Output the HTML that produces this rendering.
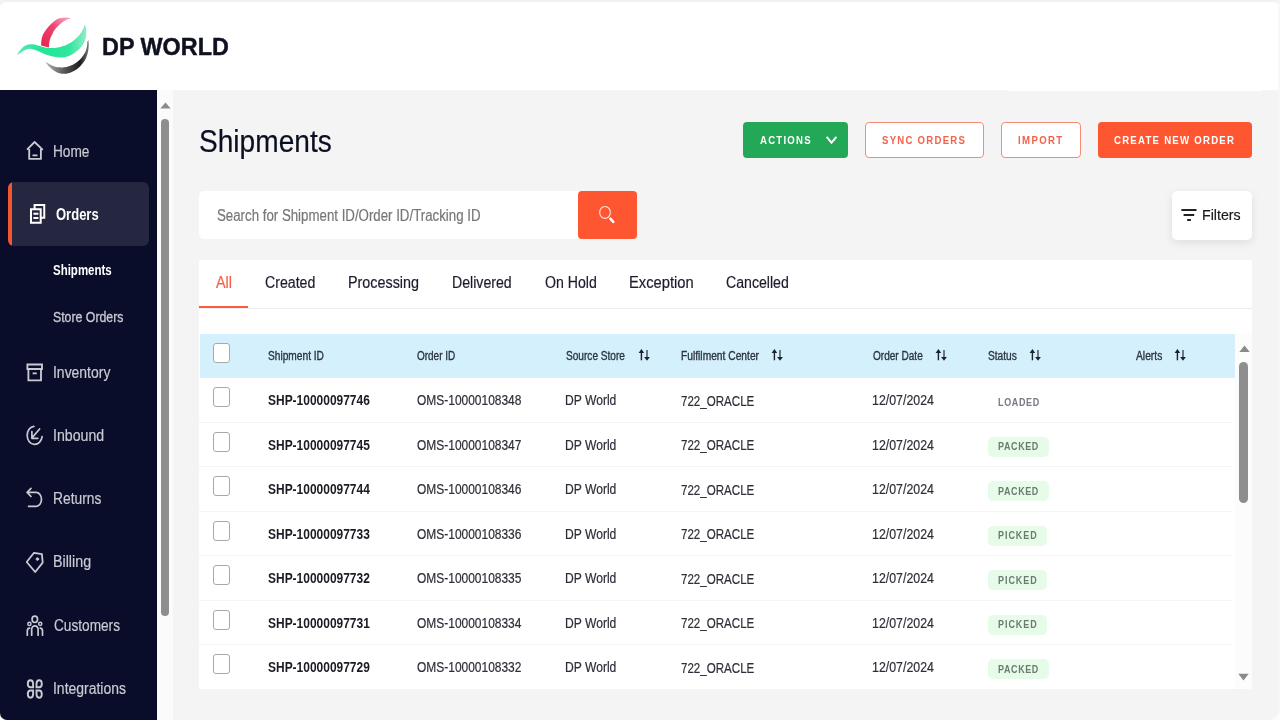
<!DOCTYPE html>
<html><head><meta charset="utf-8">
<style>
*{box-sizing:border-box;margin:0;padding:0}
html,body{width:1280px;height:720px;overflow:hidden;background:#f4f4f4;font-family:"Liberation Sans",sans-serif}
div,svg{position:absolute}
.t{position:absolute;line-height:1;white-space:nowrap;transform-origin:0 50%;-webkit-text-stroke:0.2px}
#hdr{left:0;top:0;width:1280px;height:89.5px;background:#fff;border-top:2px solid #f1f1f1;border-radius:7px 7px 0 0}
#hdr2{left:1007.5px;top:88px;width:254px;height:3.4px;background:#fff}
#redge{left:1277.5px;top:0;width:2.5px;height:720px;background:rgba(246,246,246,.8)}
#cbr{left:1268px;top:708px;width:12px;height:12px;background:radial-gradient(circle at 0 0,rgba(250,250,250,0) 11px,#fbfbfb 12.5px)}
#cbl{left:0;top:712px;width:8px;height:8px;background:#fff}
#side{left:0;top:90px;width:157px;height:630px;background:#090d29;border-radius:0 0 0 7px}
#active{left:8px;top:182px;width:141px;height:64px;background:#24273f;border-radius:6px;overflow:hidden}
#active i{position:absolute;left:0;top:0;width:4px;height:64px;background:#f4562f}
#sbar{left:157px;top:90px;width:16px;height:630px;background:#fbfbfb}
.thumb{background:#8e8e8e;border-radius:5px}
.btn{top:122px;height:35.5px;border-radius:4px}
.btn.o{border:1px solid #f58c74;background:#fff}
#search{left:199px;top:191px;width:380px;height:48px;background:#fff;border-radius:5px 0 0 5px}
#sbtn{left:577.5px;top:191px;width:59.5px;height:48px;background:#fe5631;border-radius:4px}
#filters{left:1172px;top:190.5px;width:80px;height:49.5px;background:#fff;border-radius:5px;box-shadow:0 3px 10px rgba(0,0,0,.09)}
#tabs{left:199px;top:260px;width:1053px;height:48.5px;background:#fff;border-bottom:1px solid #ededed}
#tabline{left:0;top:45.8px;width:49px;height:2.2px;background:#fb5a3d}
#tbl{left:199px;top:308.5px;width:1053px;height:380.5px;background:#fff}
#thead{left:0.5px;top:25px;width:1035.5px;height:44px;background:#d5f0fd}
#tscroll{left:1036px;top:25px;width:17px;height:355px;background:#fcfcfc}
.sep{left:0;width:1033px;height:1px;background:#f5f5f5}
.cb{left:14px;width:17px;height:20px;border:1.2px solid #a9a9a9;border-radius:3px;background:#fff}
.bd{left:789px;height:20px;border-radius:5px;background:#e7fbe9}
</style></head><body style="filter:blur(0.35px)">
<div id="cbl"></div><div id="hdr"></div><div id="hdr2"></div>
<svg style="left:0;top:0" width="100" height="90" viewBox="0 0 100 90">
<defs>
<linearGradient id="gr" x1="0" y1="1" x2="1" y2="0"><stop offset="0" stop-color="#e3234f"/><stop offset=".55" stop-color="#ee4470"/><stop offset="1" stop-color="#fbb6c8"/></linearGradient>
<linearGradient id="gg" x1="0" y1="0" x2="1" y2="0"><stop offset="0" stop-color="#5ee8b4"/><stop offset=".35" stop-color="#22e596"/><stop offset=".75" stop-color="#2fe69c"/><stop offset="1" stop-color="#8fedca"/></linearGradient>
<linearGradient id="gk" x1="0" y1="0" x2="1" y2="0"><stop offset="0" stop-color="#b5b5b5"/><stop offset=".45" stop-color="#555"/><stop offset=".8" stop-color="#1c1c20"/><stop offset="1" stop-color="#777"/></linearGradient>
</defs>
<path d="M71.3 18.3 C65 16.6 58.5 18 54.8 20.7 C51 23.5 46.5 28 43.1 34.3 C41.5 38 41 42 41.2 45.5 L48.9 47.4 C49 42 50 38 52.3 34.3 C54 30 56 28 57.7 26.5 C61 22.5 66 19.6 71.3 18.3Z" fill="url(#gr)"/>
<path d="M88.3 40.1 C89.4 46 88.5 53 85.9 58.6 C84 62 82 64.5 80 66.4 C77 69.5 74 71 72.3 71.7 C69 73.5 66 73.8 64.5 73.7 C61 73.8 58 73 56.7 72.2 C53 70.5 51 68.5 49.9 67.3 C48 65.5 46.5 63.5 45.5 61.5 C47.5 63 49.5 64.2 50.9 64.9 C54 66.5 57 67.2 58.6 67.3 C62 67.6 65 67.2 66.4 66.9 C70 66 72.5 64.8 74.2 63.9 C77.5 62 79.5 60.2 81 58.6 C83.5 55.5 85 53 85.9 50.8 C87 47.5 87.6 44 87.3 42.1Z" fill="url(#gk)"/>
<path d="M16.9 55.2 C18.5 52 20.5 49.3 22.7 47.4 C24.5 45.8 26.5 44.9 28.5 44.5 C30.5 44.1 32.5 44.1 34.4 44.5 C37 45 39 45.8 41.2 46.4 C44 47.2 46.5 47.7 48.9 47.9 C52 48.1 55 47.9 57.7 47.4 C61 46.8 64 46 66.4 45 C69.5 43.7 72 42 74.2 40.1 C76.5 38.2 78.5 36.2 80 34.3 C81.5 32.3 82.6 30.2 83.4 28.5 C84.2 26.8 84.7 25.3 84.9 24.1 C85.8 26.5 86.3 29 86.3 31.4 C86.4 34.2 86.1 36.8 85.4 39.2 C84.6 41.8 83.5 44 82 46 C80.4 48.2 78.4 50.1 76.1 51.8 C73.8 53.6 71.2 55.1 68.4 56.2 C65.9 57.1 63.3 57.6 60.6 57.6 C58 57.6 55.4 57.2 52.8 56.6 C50.2 56 47.6 55.2 45 54.2 C42.4 53.2 39.8 51.9 37.3 50.8 C35.4 49.9 33.4 49.2 31.4 48.9 C29.4 48.7 27.4 49 25.6 49.8 C23.8 50.6 22.2 51.6 20.7 52.8 C19.3 53.6 18 54.5 16.9 55.2Z" fill="url(#gg)"/>
</svg>

<div id="side"><div id="active" style="top:92px"><i></i></div></div>
<svg style="left:0;top:90px" width="157" height="630" viewBox="0 90 157 630" fill="none" stroke="#c9cad2" stroke-width="1.85" stroke-linejoin="round" stroke-linecap="round">
<!-- home -->
<path d="M27 149.6 L34.6 142 L42.8 149.8 M29.2 149 V158.9 H40.9 V149 M32.5 155.3 H37.5" stroke-linecap="butt"/>
<!-- orders -->
<g stroke="#ffffff" stroke-width="2"><path d="M31 209.2 H40.7 V222.8 H31Z M34.6 208.4 V205 H44.25 V217.8 H41.6 M33.4 213.8 H38.4 M33.4 217.9 H38.4" stroke-linecap="butt" stroke-linejoin="miter"/></g>
<!-- inventory -->
<path d="M27.4 364.5 H42 V369 H27.4Z M28.4 369 V380.3 H41 V369 M32.6 373.4 H36.8" stroke-linecap="butt" stroke-linejoin="miter"/>
<!-- inbound -->
<path d="M33.9 426.3 A7.5 9.1 0 1 0 42.1 436.6" stroke-width="1.7"/><path d="M39.6 429 L32.4 437.4 M31.9 431.6 V438.3 H37.8" stroke-width="1.7"/>
<!-- returns -->
<path d="M31 488.4 L27.1 492.4 L31 496.5 M27.4 492.4 H36.2 A5.3 6.95 0 0 1 36.2 506.3 H28.5" stroke-width="1.7"/>
<!-- billing -->
<path d="M34 552.8 L41.9 554.1 L42.7 562.6 L35.2 572 L26.7 562Z" stroke-width="1.8"/><circle cx="37.4" cy="559.1" r="1.3" fill="#c9cad2" stroke-width="0.8"/>
<!-- customers -->
<ellipse cx="34.8" cy="619.3" rx="2.75" ry="3.2" stroke-width="1.7"/><circle cx="29.4" cy="623.9" r="1.6" stroke-width="1.5"/><circle cx="40.2" cy="623.8" r="1.6" stroke-width="1.5"/>
<path d="M31.7 635.2 V629.4 A3.2 3.6 0 0 1 38.1 629.4 V635.2 M27.3 635.2 V631 A2.6 2.9 0 0 1 29.6 628.2 M42.5 635.2 V631 A2.6 2.9 0 0 0 40.2 628.2" stroke-width="1.7"/>
<!-- integrations -->
<path d="M33.1 687.3 H30.45 A2.65 3.5 0 1 1 33.1 683.8Z M36.5 687.3 H39.25 A2.65 3.5 0 1 0 36.5 683.8Z M33.1 690.5 H30.45 A2.65 3.6 0 1 0 33.1 694.1Z M36.5 690.5 H39.25 A2.65 3.6 0 1 1 36.5 694.1Z" stroke-width="1.9" stroke-linejoin="miter"/>
</svg>

<div id="sbar">
<svg style="left:2.5px;top:11.5px" width="11" height="7" viewBox="0 0 11 7"><path d="M0.3 6.5 L5.5 0.5 L10.7 6.5Z" fill="#8c8c8c"/></svg>
<div class="thumb" style="left:3.8px;top:29px;width:8.4px;height:497px"></div></div>
<div class="btn" style="left:743px;width:105px;background:#22a857"></div>
<svg style="left:825px;top:135px" width="13" height="10" viewBox="0 0 13 10"><path d="M1.6 1.8 L6.5 7.6 L11.4 1.8" fill="none" stroke="#fff" stroke-width="2"/></svg>
<div class="btn o" style="left:865px;width:119px"></div>
<div class="btn o" style="left:1000.5px;width:80px"></div>
<div class="btn" style="left:1097.5px;width:154px;background:#fe5631"></div>
<div id="search"></div>
<div id="sbtn"><svg style="left:18px;top:12px" width="24" height="24" viewBox="0 0 24 24"><ellipse cx="9" cy="9.4" rx="5.3" ry="5.9" fill="none" stroke="#ffe6df" stroke-width="1.15"/><path d="M14.3 15.6 L17.3 18.8" stroke="#fff" stroke-width="2.6" stroke-linecap="round"/></svg></div>
<div id="filters"><svg style="left:8px;top:16px" width="18" height="16" viewBox="0 0 18 16"><path d="M1.4 3H16.5M3.6 8H14.2M7.2 13H10.9" stroke="#222" stroke-width="2"/></svg></div>
<div id="tabs"><div id="tabline"></div></div>
<div id="tbl"><div id="thead"></div>
<div class="cb" style="top:34.5px"></div>
<div class="cb" style="top:78.5px"></div>
<div class="sep" style="top:113.3px"></div>
<div class="cb" style="top:123.0px"></div>
<div class="sep" style="top:157.8px"></div>
<div class="bd" style="top:128.1px;width:61.3px"></div>
<div class="cb" style="top:167.5px"></div>
<div class="sep" style="top:202.3px"></div>
<div class="bd" style="top:172.6px;width:61.3px"></div>
<div class="cb" style="top:212.0px"></div>
<div class="sep" style="top:246.8px"></div>
<div class="bd" style="top:217.1px;width:58.7px"></div>
<div class="cb" style="top:256.5px"></div>
<div class="sep" style="top:291.3px"></div>
<div class="bd" style="top:261.6px;width:58.7px"></div>
<div class="cb" style="top:301.0px"></div>
<div class="sep" style="top:335.8px"></div>
<div class="bd" style="top:306.1px;width:58.7px"></div>
<div class="cb" style="top:345.5px"></div>
<div class="sep" style="top:380.3px"></div>
<div class="bd" style="top:350.6px;width:61.3px"></div>
<div id="tscroll">
<svg style="left:3.5px;top:11px" width="11" height="8" viewBox="0 0 11 8"><path d="M0.3 7 L5.5 0.5 L10.7 7Z" fill="#8a8a8a"/></svg>
<div class="thumb" style="left:4px;top:28.5px;width:9px;height:140.5px"></div>
<svg style="left:3.3px;top:339px" width="11" height="8" viewBox="0 0 11 8"><path d="M0.3 0.8 L5.5 7.4 L10.7 0.8Z" fill="#8a8a8a"/></svg>
</div></div>
<svg style="left:638px;top:348px" width="14" height="14" viewBox="0 0 14 14"><path d="M3.4 3V12.3" stroke="#1c232c" stroke-width="1.4"/><path d="M3.4 0.9L0.6 4.9H6.2Z" fill="#1c232c"/><path d="M9 2.1V10" stroke="#4a525c" stroke-width="1.5"/><path d="M6.1 9.1H11.9L9 12.8Z" fill="#1c232c"/></svg>
<svg style="left:770.5px;top:348px" width="14" height="14" viewBox="0 0 14 14"><path d="M3.4 3V12.3" stroke="#1c232c" stroke-width="1.4"/><path d="M3.4 0.9L0.6 4.9H6.2Z" fill="#1c232c"/><path d="M9 2.1V10" stroke="#4a525c" stroke-width="1.5"/><path d="M6.1 9.1H11.9L9 12.8Z" fill="#1c232c"/></svg>
<svg style="left:935.3px;top:348px" width="14" height="14" viewBox="0 0 14 14"><path d="M3.4 3V12.3" stroke="#1c232c" stroke-width="1.4"/><path d="M3.4 0.9L0.6 4.9H6.2Z" fill="#1c232c"/><path d="M9 2.1V10" stroke="#4a525c" stroke-width="1.5"/><path d="M6.1 9.1H11.9L9 12.8Z" fill="#1c232c"/></svg>
<svg style="left:1029.3px;top:348px" width="14" height="14" viewBox="0 0 14 14"><path d="M3.4 3V12.3" stroke="#1c232c" stroke-width="1.4"/><path d="M3.4 0.9L0.6 4.9H6.2Z" fill="#1c232c"/><path d="M9 2.1V10" stroke="#4a525c" stroke-width="1.5"/><path d="M6.1 9.1H11.9L9 12.8Z" fill="#1c232c"/></svg>
<svg style="left:1174px;top:348px" width="14" height="14" viewBox="0 0 14 14"><path d="M3.4 3V12.3" stroke="#1c232c" stroke-width="1.4"/><path d="M3.4 0.9L0.6 4.9H6.2Z" fill="#1c232c"/><path d="M9 2.1V10" stroke="#4a525c" stroke-width="1.5"/><path d="M6.1 9.1H11.9L9 12.8Z" fill="#1c232c"/></svg>
<span class="t" style="left:102.04px;top:35px;font-size:24.4px;color:#10111f;transform:scaleX(0.9583);font-weight:700;-webkit-text-stroke:0.45px;">DP WORLD</span>
<span class="t" style="left:52.85px;top:144px;font-size:16px;color:#c9cad2;transform:scaleX(0.8545);">Home</span>
<span class="t" style="left:56.00px;top:207px;font-size:16px;color:#ffffff;transform:scaleX(0.8132);font-weight:700;-webkit-text-stroke:0;">Orders</span>
<span class="t" style="left:53.20px;top:263px;font-size:14px;color:#ffffff;transform:scaleX(0.8206);font-weight:700;-webkit-text-stroke:0;">Shipments</span>
<span class="t" style="left:53.20px;top:310px;font-size:14px;color:#c9cad2;transform:scaleX(0.8785);-webkit-text-stroke:0.3px;">Store Orders</span>
<span class="t" style="left:52.63px;top:365px;font-size:16px;color:#c9cad2;transform:scaleX(0.8717);">Inventory</span>
<span class="t" style="left:52.62px;top:428px;font-size:16px;color:#c9cad2;transform:scaleX(0.8849);">Inbound</span>
<span class="t" style="left:52.64px;top:491px;font-size:16px;color:#c9cad2;transform:scaleX(0.8633);">Returns</span>
<span class="t" style="left:52.91px;top:554px;font-size:16px;color:#c9cad2;transform:scaleX(0.8924);">Billing</span>
<span class="t" style="left:53.50px;top:618px;font-size:16px;color:#c9cad2;transform:scaleX(0.8532);">Customers</span>
<span class="t" style="left:52.63px;top:681px;font-size:16px;color:#c9cad2;transform:scaleX(0.8716);">Integrations</span>
<span class="t" style="left:199.12px;top:125px;font-size:32px;color:#0b0d22;transform:scaleX(0.8781);">Shipments</span>
<span class="t" style="left:759.80px;top:135px;font-size:11.3px;color:#ffffff;transform:scaleX(0.8500);font-weight:700;-webkit-text-stroke:0;letter-spacing:1.450px;">ACTIONS</span>
<span class="t" style="left:882.20px;top:135px;font-size:11.3px;color:#f4624a;transform:scaleX(0.8500);font-weight:700;-webkit-text-stroke:0;letter-spacing:1.468px;">SYNC ORDERS</span>
<span class="t" style="left:1017.90px;top:135px;font-size:11.3px;color:#f4624a;transform:scaleX(0.8500);font-weight:700;-webkit-text-stroke:0;letter-spacing:1.594px;">IMPORT</span>
<span class="t" style="left:1114.00px;top:135px;font-size:11.3px;color:#ffffff;transform:scaleX(0.8500);font-weight:700;-webkit-text-stroke:0;letter-spacing:1.471px;">CREATE NEW ORDER</span>
<span class="t" style="left:216.50px;top:208px;font-size:16px;color:#777777;transform:scaleX(0.8292);">Search for Shipment ID/Order ID/Tracking ID</span>
<span class="t" style="left:1202.39px;top:207px;font-size:15.5px;color:#1a1a1a;transform:scaleX(0.9145);">Filters</span>
<span class="t" style="left:215.50px;top:275px;font-size:16px;color:#f4624a;transform:scaleX(0.8998);">All</span>
<span class="t" style="left:265.00px;top:275px;font-size:16px;color:#1c1c2e;transform:scaleX(0.8836);">Created</span>
<span class="t" style="left:347.85px;top:275px;font-size:16px;color:#1c1c2e;transform:scaleX(0.8964);">Processing</span>
<span class="t" style="left:451.62px;top:275px;font-size:16px;color:#1c1c2e;transform:scaleX(0.8830);">Delivered</span>
<span class="t" style="left:544.50px;top:275px;font-size:16px;color:#1c1c2e;transform:scaleX(0.8824);">On Hold</span>
<span class="t" style="left:628.58px;top:275px;font-size:16px;color:#1c1c2e;transform:scaleX(0.9215);">Exception</span>
<span class="t" style="left:726.00px;top:275px;font-size:16px;color:#1c1c2e;transform:scaleX(0.8825);">Cancelled</span>
<span class="t" style="left:267.75px;top:350px;font-size:12px;color:#2b3640;transform:scaleX(0.8476);-webkit-text-stroke:0.35px;">Shipment ID</span>
<span class="t" style="left:416.75px;top:350px;font-size:12px;color:#2b3640;transform:scaleX(0.8308);-webkit-text-stroke:0.35px;">Order ID</span>
<span class="t" style="left:566.00px;top:350px;font-size:12px;color:#2b3640;transform:scaleX(0.8421);-webkit-text-stroke:0.35px;">Source Store</span>
<span class="t" style="left:680.50px;top:350px;font-size:12px;color:#2b3640;transform:scaleX(0.8537);-webkit-text-stroke:0.35px;">Fulfilment Center</span>
<span class="t" style="left:872.50px;top:350px;font-size:12px;color:#2b3640;transform:scaleX(0.8378);-webkit-text-stroke:0.35px;">Order Date</span>
<span class="t" style="left:988.10px;top:350px;font-size:12px;color:#2b3640;transform:scaleX(0.8466);-webkit-text-stroke:0.35px;">Status</span>
<span class="t" style="left:1135.60px;top:350px;font-size:12px;color:#2b3640;transform:scaleX(0.8574);-webkit-text-stroke:0.35px;">Alerts</span>
<span class="t" style="left:267.75px;top:393px;font-size:14px;color:#1b1b24;transform:scaleX(0.8549);font-weight:700;-webkit-text-stroke:0;">SHP-10000097746</span>
<span class="t" style="left:416.90px;top:393px;font-size:14px;color:#2e2e38;transform:scaleX(0.8545);">OMS-10000108348</span>
<span class="t" style="left:565.14px;top:393px;font-size:14px;color:#2e2e38;transform:scaleX(0.8642);">DP World</span>
<span class="t" style="left:680.50px;top:394px;font-size:14px;color:#2e2e38;transform:scaleX(0.8260);">722_ORACLE</span>
<span class="t" style="left:871.62px;top:393px;font-size:14px;color:#2e2e38;transform:scaleX(0.8841);">12/07/2024</span>
<span class="t" style="left:998.20px;top:398px;font-size:10.2px;color:#767a80;transform:scaleX(0.8800);font-weight:700;-webkit-text-stroke:0;letter-spacing:0.764px;">LOADED</span>
<span class="t" style="left:267.75px;top:438px;font-size:14px;color:#1b1b24;transform:scaleX(0.8549);font-weight:700;-webkit-text-stroke:0;">SHP-10000097745</span>
<span class="t" style="left:416.90px;top:438px;font-size:14px;color:#2e2e38;transform:scaleX(0.8545);">OMS-10000108347</span>
<span class="t" style="left:565.14px;top:438px;font-size:14px;color:#2e2e38;transform:scaleX(0.8642);">DP World</span>
<span class="t" style="left:680.50px;top:438px;font-size:14px;color:#2e2e38;transform:scaleX(0.8260);">722_ORACLE</span>
<span class="t" style="left:871.62px;top:438px;font-size:14px;color:#2e2e38;transform:scaleX(0.8841);">12/07/2024</span>
<span class="t" style="left:998.20px;top:442px;font-size:10.2px;color:#6b7b72;transform:scaleX(0.8800);font-weight:700;-webkit-text-stroke:0;letter-spacing:0.710px;">PACKED</span>
<span class="t" style="left:267.75px;top:482px;font-size:14px;color:#1b1b24;transform:scaleX(0.8549);font-weight:700;-webkit-text-stroke:0;">SHP-10000097744</span>
<span class="t" style="left:416.90px;top:482px;font-size:14px;color:#2e2e38;transform:scaleX(0.8545);">OMS-10000108346</span>
<span class="t" style="left:565.14px;top:482px;font-size:14px;color:#2e2e38;transform:scaleX(0.8642);">DP World</span>
<span class="t" style="left:680.50px;top:483px;font-size:14px;color:#2e2e38;transform:scaleX(0.8260);">722_ORACLE</span>
<span class="t" style="left:871.62px;top:482px;font-size:14px;color:#2e2e38;transform:scaleX(0.8841);">12/07/2024</span>
<span class="t" style="left:998.20px;top:487px;font-size:10.2px;color:#6b7b72;transform:scaleX(0.8800);font-weight:700;-webkit-text-stroke:0;letter-spacing:0.710px;">PACKED</span>
<span class="t" style="left:267.75px;top:527px;font-size:14px;color:#1b1b24;transform:scaleX(0.8549);font-weight:700;-webkit-text-stroke:0;">SHP-10000097733</span>
<span class="t" style="left:416.90px;top:527px;font-size:14px;color:#2e2e38;transform:scaleX(0.8545);">OMS-10000108336</span>
<span class="t" style="left:565.14px;top:527px;font-size:14px;color:#2e2e38;transform:scaleX(0.8642);">DP World</span>
<span class="t" style="left:680.50px;top:527px;font-size:14px;color:#2e2e38;transform:scaleX(0.8260);">722_ORACLE</span>
<span class="t" style="left:871.62px;top:527px;font-size:14px;color:#2e2e38;transform:scaleX(0.8841);">12/07/2024</span>
<span class="t" style="left:998.20px;top:531px;font-size:10.2px;color:#6b7b72;transform:scaleX(0.8800);font-weight:700;-webkit-text-stroke:0;letter-spacing:1.100px;">PICKED</span>
<span class="t" style="left:267.75px;top:571px;font-size:14px;color:#1b1b24;transform:scaleX(0.8549);font-weight:700;-webkit-text-stroke:0;">SHP-10000097732</span>
<span class="t" style="left:416.90px;top:571px;font-size:14px;color:#2e2e38;transform:scaleX(0.8545);">OMS-10000108335</span>
<span class="t" style="left:565.14px;top:571px;font-size:14px;color:#2e2e38;transform:scaleX(0.8642);">DP World</span>
<span class="t" style="left:680.50px;top:572px;font-size:14px;color:#2e2e38;transform:scaleX(0.8260);">722_ORACLE</span>
<span class="t" style="left:871.62px;top:571px;font-size:14px;color:#2e2e38;transform:scaleX(0.8841);">12/07/2024</span>
<span class="t" style="left:998.20px;top:576px;font-size:10.2px;color:#6b7b72;transform:scaleX(0.8800);font-weight:700;-webkit-text-stroke:0;letter-spacing:1.100px;">PICKED</span>
<span class="t" style="left:267.75px;top:616px;font-size:14px;color:#1b1b24;transform:scaleX(0.8549);font-weight:700;-webkit-text-stroke:0;">SHP-10000097731</span>
<span class="t" style="left:416.90px;top:616px;font-size:14px;color:#2e2e38;transform:scaleX(0.8545);">OMS-10000108334</span>
<span class="t" style="left:565.14px;top:616px;font-size:14px;color:#2e2e38;transform:scaleX(0.8642);">DP World</span>
<span class="t" style="left:680.50px;top:616px;font-size:14px;color:#2e2e38;transform:scaleX(0.8260);">722_ORACLE</span>
<span class="t" style="left:871.62px;top:616px;font-size:14px;color:#2e2e38;transform:scaleX(0.8841);">12/07/2024</span>
<span class="t" style="left:998.20px;top:620px;font-size:10.2px;color:#6b7b72;transform:scaleX(0.8800);font-weight:700;-webkit-text-stroke:0;letter-spacing:1.100px;">PICKED</span>
<span class="t" style="left:267.75px;top:660px;font-size:14px;color:#1b1b24;transform:scaleX(0.8549);font-weight:700;-webkit-text-stroke:0;">SHP-10000097729</span>
<span class="t" style="left:416.90px;top:660px;font-size:14px;color:#2e2e38;transform:scaleX(0.8545);">OMS-10000108332</span>
<span class="t" style="left:565.14px;top:660px;font-size:14px;color:#2e2e38;transform:scaleX(0.8642);">DP World</span>
<span class="t" style="left:680.50px;top:661px;font-size:14px;color:#2e2e38;transform:scaleX(0.8260);">722_ORACLE</span>
<span class="t" style="left:871.62px;top:660px;font-size:14px;color:#2e2e38;transform:scaleX(0.8841);">12/07/2024</span>
<span class="t" style="left:998.20px;top:665px;font-size:10.2px;color:#6b7b72;transform:scaleX(0.8800);font-weight:700;-webkit-text-stroke:0;letter-spacing:0.710px;">PACKED</span>
<div id="redge"></div><div id="cbr"></div>
</body></html>
